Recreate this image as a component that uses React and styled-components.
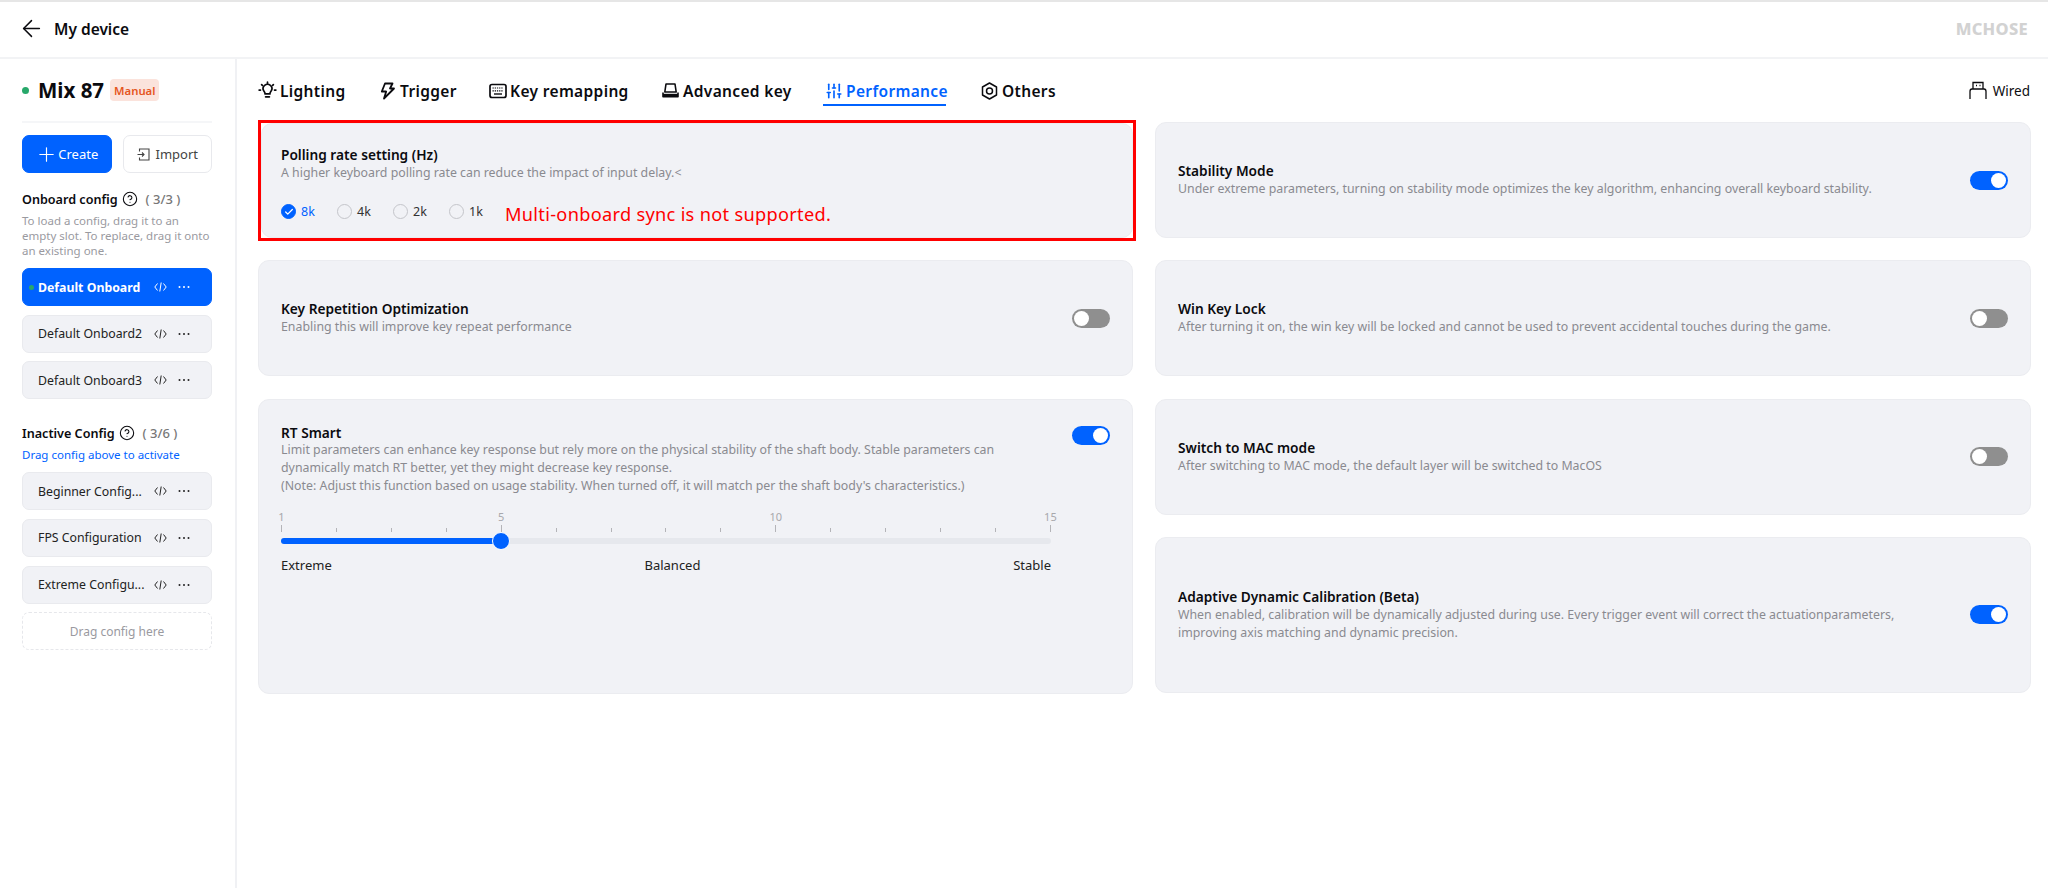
import React from 'react'
import styled, { createGlobalStyle } from 'styled-components'
import { ArrowLeft, Plus, CircleHelp, SlidersVertical, Check } from 'lucide-react'

const blue = '#0062ff'

const GlobalStyle = createGlobalStyle`
  html, body { margin: 0; padding: 0; background: #fff; }
  body { font-family: "Noto Sans", "Noto Sans CJK SC", sans-serif; color: #0b0b0f; }
  * { box-sizing: border-box; }
`

const Page = styled.div`
  width: 2048px;
  height: 888px;
  display: flex;
  flex-direction: column;
  border-top: 2px solid #e6e6e6;
  overflow: hidden;
`

const Header = styled.header`
  height: 57px;
  flex: none;
  display: flex;
  align-items: center;
  padding: 0 20px 2px 18px;
  border-bottom: 2px solid #f2f3f5;
`

const BackTitle = styled.div`
  display: flex;
  align-items: center;
  gap: 9px;
  font-size: 15.5px;
  font-weight: 600;
`

const Logo = styled.div`
  margin-left: auto;
  font-size: 16.5px;
  font-weight: 800;
  letter-spacing: 0.3px;
  color: #d2d2d2;
`

const Body = styled.div`
  flex: 1;
  display: flex;
  min-height: 0;
`

const Sidebar = styled.aside`
  width: 237px;
  flex: none;
  padding: 0 23px 0 22px;
  border-right: 2px solid #f0f1f4;
`

const DeviceRow = styled.div`
  height: 64px;
  display: flex;
  align-items: center;
  border-bottom: 2px solid #f5f6f8;
`

const Dot = styled.span`
  width: ${({ size }) => size}px;
  height: ${({ size }) => size}px;
  border-radius: 50%;
  background: #27a86a;
  flex: none;
`

const DeviceName = styled.span`
  font-size: 20.5px;
  font-weight: 700;
  margin: 0 6px 0 9px;
`

const ManualTag = styled.span`
  height: 22px;
  padding: 0 4px;
  display: flex;
  align-items: center;
  border-radius: 4px;
  background: #fbe3dc;
  color: #e5561f;
  font-size: 11.3px;
  font-weight: 600;
`

const ButtonRow = styled.div`
  display: flex;
  gap: 11px;
  margin-top: 12px;
`

const ActionButton = styled.div`
  flex: 1;
  height: 38px;
  border-radius: 7px;
  display: flex;
  align-items: center;
  justify-content: center;
  gap: ${({ primary }) => (primary ? 0 : 6)}px;
  font-size: 13px;
  background: ${({ primary }) => (primary ? blue : '#fff')};
  color: ${({ primary }) => (primary ? '#fff' : '#444')};
  border: 1px solid ${({ primary }) => (primary ? blue : '#e8e9ed')};
`

const SectionTitle = styled.div`
  display: flex;
  align-items: center;
  gap: 4px;
  margin-top: ${({ top }) => top}px;
  height: 18px;
  font-size: 12.6px;
  font-weight: 600;
`

const Count = styled.span`
  margin-left: 4px;
  font-size: 13px;
  color: #777;
  font-weight: 500;
`

const SideHint = styled.div`
  margin-top: ${({ top }) => top}px;
  font-size: 11.5px;
  line-height: 15px;
  color: ${({ accent }) => (accent ? blue : '#9a9a9f')};
`

const ConfigList = styled.div`
  display: flex;
  flex-direction: column;
  gap: 8.67px;
  margin-top: ${({ top }) => top}px;
`

const ConfigItem = styled.div`
  height: 38px;
  display: flex;
  align-items: center;
  padding-left: ${({ active }) => (active ? 6 : 15)}px;
  border-radius: 7px;
  font-size: 12.3px;
  font-weight: ${({ active }) => (active ? 700 : 400)};
  background: ${({ active }) => (active ? blue : '#f1f2f6')};
  color: ${({ active }) => (active ? '#fff' : '#222')};
  border: 1px solid ${({ active }) => (active ? blue : '#e9eaee')};
`

const ConfigName = styled.span`
  width: 116px;
  margin-left: ${({ active }) => (active ? 4 : 0)}px;
  white-space: nowrap;
`

const ConfigActions = styled.span`
  display: flex;
  align-items: center;
  gap: 11px;
  color: inherit;
`

const DropSlot = styled.div`
  height: 38px;
  display: flex;
  align-items: center;
  justify-content: center;
  border: 1px dashed #e6e7eb;
  border-radius: 7px;
  font-size: 12px;
  color: #9a9a9f;
`

const Main = styled.main`
  flex: 1;
  padding: 0 16px 0 21px;
`

const TabBar = styled.nav`
  height: 63px;
  display: flex;
  align-items: center;
`

const Tab = styled.div`
  position: relative;
  display: flex;
  align-items: center;
  gap: 3px;
  width: ${({ w }) => w}px;
  font-size: 15.5px;
  font-weight: 600;
  letter-spacing: 0.35px;
  color: ${({ active }) => (active ? blue : '#0b0b0f')};
`

const TabIcon = styled.span`
  width: 19px;
  flex: none;
  display: flex;
  align-items: center;
  justify-content: center;
`

const TabLine = styled.span`
  position: absolute;
  left: -1px;
  bottom: -4px;
  width: 123px;
  height: 2px;
  background: ${blue};
`

const Wired = styled.div`
  margin-left: auto;
  margin-right: 2px;
  display: flex;
  align-items: center;
  gap: 6px;
  font-size: 13.5px;
`

const Columns = styled.div`
  display: grid;
  grid-template-columns: 875px 876px;
  gap: 22px;
`

const Column = styled.div`
  display: flex;
  flex-direction: column;
  gap: 22.3px;
`

const Card = styled.section`
  height: ${({ h }) => h}px;
  padding: 0 22px;
  display: flex;
  align-items: center;
  border-radius: 11px;
  background: #f1f2f6;
  border: 1px solid #ebecf0;
`

const FlagFrame = styled.div`
  margin: -2px -3px -3px 0;
  border: 3px solid #f00;
`

const FlaggedCard = styled(Card)`
  padding: 6px 22px 0 19px;
`

const TallCard = styled(Card)`
  display: block;
  padding-top: 24px;
`

const CardText = styled.div`
  flex: 1;
`

const CardTitle = styled.div`
  font-size: 13.7px;
  line-height: 18px;
  font-weight: 600;
  color: #0b0b0f;
`

const CardDesc = styled.div`
  font-size: 12.35px;
  line-height: 18px;
  color: #8a8a90;
  white-space: pre-line;
`

const TitleRow = styled.div`
  height: 17px;
  display: flex;
  justify-content: space-between;
  align-items: flex-start;
`

const Toggle = styled.div`
  width: 38px;
  height: 19px;
  flex: none;
  padding: 2px;
  margin-top: ${({ top }) => top || 0}px;
  display: flex;
  justify-content: ${({ on }) => (on ? 'flex-end' : 'flex-start')};
  border-radius: 10px;
  background: ${({ on }) => (on ? blue : '#8f8f8f')};
`

const Knob = styled.span`
  width: 15px;
  height: 15px;
  border-radius: 50%;
  background: #fff;
`

const RadioRow = styled.div`
  display: flex;
  align-items: center;
  margin-top: 20px;
`

const Radio = styled.div`
  width: 56px;
  display: flex;
  align-items: center;
  gap: 5px;
  font-size: 12.5px;
  color: ${({ checked }) => (checked ? blue : '#333')};
`

const RadioMark = styled.span`
  width: 15px;
  height: 15px;
  display: flex;
  align-items: center;
  justify-content: center;
  border-radius: 50%;
  background: ${({ checked }) => (checked ? blue : 'transparent')};
  border: 1px solid ${({ checked }) => (checked ? blue : '#c4c5ca')};
  color: #fff;
`

const Warning = styled.span`
  margin-top: 6px;
  font-size: 18.2px;
  line-height: 13px;
  letter-spacing: 0.3px;
  color: #f00;
`

const Slider = styled.div`
  width: 770px;
  margin-top: 13px;
`

const TickRow = styled.div`
  display: flex;
  justify-content: space-between;
  align-items: flex-end;
  height: 24px;
`

const Tick = styled.span`
  position: relative;
  width: 1px;
  height: ${({ major }) => (major ? 7 : 4)}px;
  background: #b4b4b8;
`

const TickLabel = styled.span`
  position: absolute;
  left: 50%;
  bottom: 8px;
  transform: translateX(-50%);
  font-size: 11px;
  line-height: 14px;
  color: #a8a8ac;
`

const Track = styled.div`
  position: relative;
  height: 6px;
  margin-top: 6px;
  border-radius: 3px;
  background: #e6e8ed;
`

const TrackFill = styled.div`
  height: 100%;
  border-radius: 3px;
  background: ${blue};
`

const Thumb = styled.span`
  position: absolute;
  top: -6px;
  width: 18px;
  height: 18px;
  margin-left: -9px;
  border-radius: 50%;
  background: ${blue};
  border: 1px solid #fff;
`

const SliderLabels = styled.div`
  display: flex;
  justify-content: space-between;
  margin-top: 12px;
  font-size: 13px;
  color: #222;
`

const BulbIcon = () => (
  <svg width="19" height="19" viewBox="0 0 20 20" fill="none" stroke="currentColor" strokeWidth="1.8" strokeLinecap="round">
    <path d="M6.2 10.6a4.6 4.6 0 1 1 7.6 0c-.7.9-1.2 1.7-1.3 3H7.5c-.1-1.3-.6-2.1-1.3-3Z" />
    <path d="M8 16.6h4" />
    <path d="M10 1.2v1M3.8 3.8l.8.8M16.2 3.8l-.8.8M1.2 9.5h1.4M17.4 9.5h1.4" />
  </svg>
)

const BoltIcon = () => (
  <svg width="15" height="18" viewBox="0 0 15 18" fill="none" stroke="currentColor" strokeWidth="1.8" strokeLinejoin="round">
    <path d="M5 1.5h7.5l-2.5 5h4L4 16.5l2.2-7H1.8L5 1.5Z" />
  </svg>
)

const KeyboardIcon = () => (
  <svg width="18" height="16" viewBox="0 0 18 16" fill="none" stroke="currentColor">
    <rect x="1" y="1.5" width="16" height="13" rx="2" strokeWidth="1.7" />
    <path d="M3.5 5h11M3.5 7.8h11" strokeWidth="1.2" strokeDasharray="1.3 0.9" />
    <path d="M5 11h8" strokeWidth="1.4" />
  </svg>
)

const KeycapIcon = () => (
  <svg width="17" height="15" viewBox="0 0 17 15" fill="none" stroke="currentColor" strokeWidth="1.6" strokeLinejoin="round">
    <path d="M4 1h9l1.2 8H2.8L4 1Z" />
    <path d="M1 9.5v4.3h15V9.5" />
    <path d="M1 12h15" strokeWidth="2.4" />
  </svg>
)

const NutIcon = () => (
  <svg width="17" height="18" viewBox="0 0 17 18" fill="none" stroke="currentColor" strokeWidth="1.5">
    <path d="M8.5 1 15.5 5v8l-7 4-7-4V5l7-4Z" strokeLinejoin="round" />
    <circle cx="8.5" cy="9" r="3" />
  </svg>
)

const UsbIcon = () => (
  <svg width="18" height="19" viewBox="0 0 18 19" fill="none" stroke="currentColor" strokeWidth="1.3">
    <path d="M4 8V1.5h10V8" />
    <path d="M1 18v-7.5Q1 8 3 8h12q2 0 2 2.5V18" />
    <path d="M7 4.5h1M10.5 4.5h1" />
  </svg>
)

const ImportIcon = () => (
  <svg width="13" height="13" viewBox="0 0 13 13" fill="none" stroke="currentColor" strokeWidth="1.1">
    <path d="M2.5 3.5V1h9.5v11H2.5V9.5" />
    <path d="M0.5 6.5h6.5M5 4.5l2 2-2 2" />
  </svg>
)

const CodeIcon = () => (
  <svg width="13" height="10" viewBox="0 0 13 10" fill="none" stroke="currentColor" strokeWidth="1">
    <path d="M3.5 1.5 0.8 5l2.7 3.5M9.5 1.5 12.2 5 9.5 8.5M7.2 0.5 5.8 9.5" />
  </svg>
)

const MoreIcon = () => (
  <svg width="12" height="4" viewBox="0 0 12 4" fill="currentColor">
    <circle cx="1.5" cy="2" r="1" />
    <circle cx="6" cy="2" r="1" />
    <circle cx="10.5" cy="2" r="1" />
  </svg>
)

const tabs = [
  { label: 'Lighting', icon: <BulbIcon />, w: 120 },
  { label: 'Trigger', icon: <BoltIcon />, w: 110 },
  { label: 'Key remapping', icon: <KeyboardIcon />, w: 173 },
  { label: 'Advanced key', icon: <KeycapIcon />, w: 163 },
  { label: 'Performance', icon: <SlidersVertical size={18} strokeWidth={2.2} />, w: 156, active: true },
  { label: 'Others', icon: <NutIcon />, w: 90 },
]

const ConfigRow = ({ name, active }) => (
  <ConfigItem active={active}>
    {active && <Dot size={5} />}
    <ConfigName active={active}>{name}</ConfigName>
    <ConfigActions>
      <CodeIcon />
      <MoreIcon />
    </ConfigActions>
  </ConfigItem>
)

const ticks = Array.from({ length: 15 }, (_, i) => i + 1)

const App = () => (
  <Page>
    <GlobalStyle />
    <Header>
      <BackTitle>
        <ArrowLeft size={27} strokeWidth={1.3} />
        My device
      </BackTitle>
      <Logo>MCHOSE</Logo>
    </Header>
    <Body>
      <Sidebar>
        <DeviceRow>
          <Dot size={7} />
          <DeviceName>Mix 87</DeviceName>
          <ManualTag>Manual</ManualTag>
        </DeviceRow>
        <ButtonRow>
          <ActionButton primary>
            <Plus size={23} strokeWidth={1.2} />
            Create
          </ActionButton>
          <ActionButton>
            <ImportIcon />
            Import
          </ActionButton>
        </ButtonRow>
        <SectionTitle top={17}>
          Onboard config
          <CircleHelp size={16} strokeWidth={1.6} />
          <Count>( 3/3 )</Count>
        </SectionTitle>
        <SideHint top={5}>
          To load a config, drag it to an empty slot. To replace, drag it onto an existing one.
        </SideHint>
        <ConfigList top={10}>
          <ConfigRow name="Default Onboard" active />
          <ConfigRow name="Default Onboard2" />
          <ConfigRow name="Default Onboard3" />
        </ConfigList>
        <SectionTitle top={25}>
          Inactive Config
          <CircleHelp size={16} strokeWidth={1.6} />
          <Count>( 3/6 )</Count>
        </SectionTitle>
        <SideHint top={5} accent>
          Drag config above to activate
        </SideHint>
        <ConfigList top={10}>
          <ConfigRow name="Beginner Config..." />
          <ConfigRow name="FPS Configuration" />
          <ConfigRow name="Extreme Configu..." />
          <DropSlot>Drag config here</DropSlot>
        </ConfigList>
      </Sidebar>
      <Main>
        <TabBar>
          {tabs.map((t) => (
            <Tab key={t.label} w={t.w} active={t.active}>
              <TabIcon>{t.icon}</TabIcon>
              {t.label}
              {t.active && <TabLine />}
            </Tab>
          ))}
          <Wired>
            <UsbIcon />
            Wired
          </Wired>
        </TabBar>
        <Columns>
          <Column>
            <FlagFrame>
              <FlaggedCard h={115}>
                <CardText>
                  <CardTitle>Polling rate setting (Hz)</CardTitle>
                  <CardDesc>A higher keyboard polling rate can reduce the impact of input delay.&lt;</CardDesc>
                  <RadioRow>
                    <Radio checked>
                      <RadioMark checked>
                        <Check size={10} strokeWidth={3} />
                      </RadioMark>
                      8k
                    </Radio>
                    <Radio>
                      <RadioMark />
                      4k
                    </Radio>
                    <Radio>
                      <RadioMark />
                      2k
                    </Radio>
                    <Radio>
                      <RadioMark />
                      1k
                    </Radio>
                    <Warning>Multi-onboard sync is not supported.</Warning>
                  </RadioRow>
                </CardText>
              </FlaggedCard>
            </FlagFrame>
            <Card h={116}>
              <CardText>
                <CardTitle>Key Repetition Optimization</CardTitle>
                <CardDesc>Enabling this will improve key repeat performance</CardDesc>
              </CardText>
              <Toggle>
                <Knob />
              </Toggle>
            </Card>
            <TallCard h={295}>
              <TitleRow>
                <CardTitle>RT Smart</CardTitle>
                <Toggle on top={2}>
                  <Knob />
                </Toggle>
              </TitleRow>
              <CardDesc>
                {`Limit parameters can enhance key response but rely more on the physical stability of the shaft body. Stable parameters can
dynamically match RT better, yet they might decrease key response.
(Note: Adjust this function based on usage stability. When turned off, it will match per the shaft body's characteristics.)`}
              </CardDesc>
              <Slider>
                <TickRow>
                  {ticks.map((n) => {
                    const major = n === 1 || n % 5 === 0
                    return (
                      <Tick key={n} major={major}>
                        {major && <TickLabel>{n}</TickLabel>}
                      </Tick>
                    )
                  })}
                </TickRow>
                <Track>
                  <TrackFill style={{ width: `${(4 / 14) * 100}%` }} />
                  <Thumb style={{ left: `${(4 / 14) * 100}%` }} />
                </Track>
                <SliderLabels>
                  <span>Extreme</span>
                  <span>Balanced</span>
                  <span>Stable</span>
                </SliderLabels>
              </Slider>
            </TallCard>
          </Column>
          <Column>
            <Card h={116}>
              <CardText>
                <CardTitle>Stability Mode</CardTitle>
                <CardDesc>Under extreme parameters, turning on stability mode optimizes the key algorithm, enhancing overall keyboard stability.</CardDesc>
              </CardText>
              <Toggle on>
                <Knob />
              </Toggle>
            </Card>
            <Card h={116}>
              <CardText>
                <CardTitle>Win Key Lock</CardTitle>
                <CardDesc>After turning it on, the win key will be locked and cannot be used to prevent accidental touches during the game.</CardDesc>
              </CardText>
              <Toggle>
                <Knob />
              </Toggle>
            </Card>
            <Card h={116}>
              <CardText>
                <CardTitle>Switch to MAC mode</CardTitle>
                <CardDesc>After switching to MAC mode, the default layer will be switched to MacOS</CardDesc>
              </CardText>
              <Toggle>
                <Knob />
              </Toggle>
            </Card>
            <Card h={156}>
              <CardText>
                <CardTitle>Adaptive Dynamic Calibration (Beta)</CardTitle>
                <CardDesc>
                  {`When enabled, calibration will be dynamically adjusted during use. Every trigger event will correct the actuationparameters,
improving axis matching and dynamic precision.`}
                </CardDesc>
              </CardText>
              <Toggle on>
                <Knob />
              </Toggle>
            </Card>
          </Column>
        </Columns>
      </Main>
    </Body>
  </Page>
)

export default App
